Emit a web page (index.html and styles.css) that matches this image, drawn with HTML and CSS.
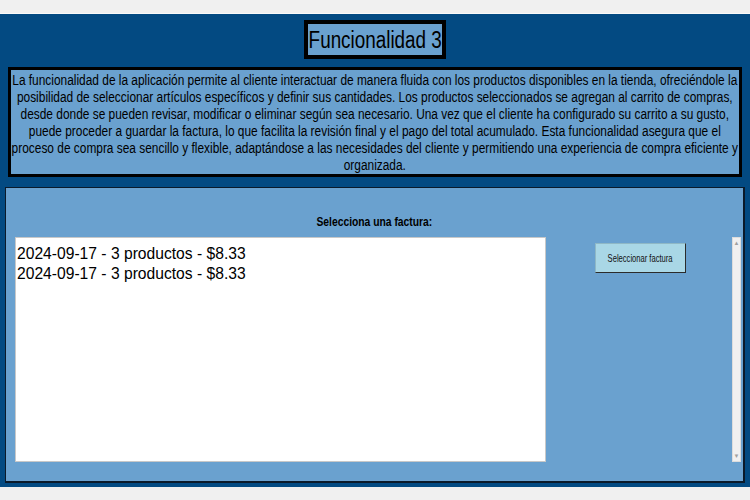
FILE: index.html
```html
<!DOCTYPE html>
<html lang="es">
<head>
<meta charset="utf-8">
<title>Funcionalidad 3</title>
<link rel="stylesheet" href="styles.css">
</head>
<body>
<div class="topbar"></div>
<main class="frame">
  <div class="title-row">
    <h1 class="title"><span class="title-text">Funcionalidad 3</span></h1>
  </div>
  <div class="desc">
    <p class="desc-text">La funcionalidad de la aplicación permite al cliente interactuar de manera fluida con los productos disponibles en la tienda, ofreciéndole la<br>posibilidad de seleccionar artículos específicos y definir sus cantidades. Los productos seleccionados se agregan al carrito de compras,<br>desde donde se pueden revisar, modificar o eliminar según sea necesario. Una vez que el cliente ha configurado su carrito a su gusto,<br>puede proceder a guardar la factura, lo que facilita la revisión final y el pago del total acumulado. Esta funcionalidad asegura que el<br>proceso de compra sea sencillo y flexible, adaptándose a las necesidades del cliente y permitiendo una experiencia de compra eficiente y<br>organizada.</p>
  </div>
  <section class="panel">
    <div class="label"><span class="label-text">Selecciona una factura:</span></div>
    <div class="panel-row">
      <ul class="list">
        <li><span class="item-text">2024-09-17 - 3 productos - $8.33</span></li>
        <li><span class="item-text">2024-09-17 - 3 productos - $8.33</span></li>
      </ul>
      <div class="actions">
        <button class="btn" type="button"><span class="btn-text">Seleccionar factura</span></button>
      </div>
      <div class="scrollbar">
        <span class="arrow">&#9650;</span>
        <span class="arrow">&#9660;</span>
      </div>
    </div>
  </section>
</main>
<div class="bottombar"></div>
</body>
</html>
```
FILE: styles.css
```css
* { box-sizing: border-box; }
html, body { margin: 0; padding: 0; }
body {
  width: 750px;
  height: 500px;
  background: #f0f0f0;
  font-family: "Liberation Sans", Arial, sans-serif;
  color: #000;
  overflow: hidden;
}
.topbar {
  height: 14px;
  background: #f0f0f0;
  border-bottom: 1px solid #fafafa;
}
.frame {
  background: #034a82;
  height: 473px;
  padding: 6px 5px 4px 5px;
  display: flex;
  flex-direction: column;
}
.title-row {
  display: flex;
  justify-content: center;
}
.title {
  margin: 0;
  width: 142px;
  height: 39px;
  border: 4px solid #000;
  background: #6aa1cf;
  font-weight: normal;
  font-size: 23px;
  line-height: 32px;
  display: flex;
  justify-content: center;
  white-space: nowrap;
}
.title-text {
  display: inline-block;
  transform: scaleX(0.82);
  transform-origin: 50% 50%;
}
.desc {
  margin: 8px 3px 0 3px;
  height: 110px;
  border: 3px solid #000;
  background: #6aa1cf;
  overflow: hidden;
  padding-top: 2px;
}
.desc-text {
  margin: 0;
  width: 856px;
  font-size: 14px;
  line-height: 17px;
  text-align: center;
  white-space: nowrap;
  transform: scaleX(0.85);
  transform-origin: 0 0;
}
.panel {
  margin-top: 10px;
  flex: 1;
  background: #6aa1cf;
  border: 1px solid #0b1a2a;
  border-width: 1px 2px 2px 1px;
  display: flex;
  flex-direction: column;
}
.label {
  font-weight: bold;
  font-size: 12px;
  line-height: 14px;
  text-align: center;
  margin-top: 27px;
  height: 22px;
  display: flex;
  justify-content: center;
  white-space: nowrap;
}
.label-text {
  display: inline-block;
  transform: scaleX(0.86);
}
.panel-row {
  display: flex;
  align-items: flex-start;
  padding-left: 9px;
}
.list {
  list-style: none;
  margin: 0;
  padding: 6px 0 0 1px;
  width: 531px;
  height: 225px;
  background: #fff;
  border: 1px solid #c8c8c8;
  font-size: 17px;
  line-height: 20px;
  white-space: nowrap;
}
.item-text {
  display: inline-block;
  transform: scaleX(0.92);
  transform-origin: 0 50%;
}
.actions {
  width: 186px;
  display: flex;
  justify-content: center;
  padding-top: 6px;
  padding-left: 3px;
}
.btn {
  width: 91px;
  height: 30px;
  background: #a9d7e6;
  border: 1px solid #8fb8c6;
  border-right-color: #2b2b2b;
  border-bottom-color: #2b2b2b;
  font-family: "Liberation Sans", Arial, sans-serif;
  font-size: 11px;
  color: #111;
  padding: 0;
  display: flex;
  justify-content: center;
  align-items: center;
  white-space: nowrap;
}
.btn-text {
  display: inline-block;
  transform: scaleX(0.69);
}
.scrollbar {
  width: 9px;
  height: 225px;
  background: #f0f0f0;
  border: 1px solid #dcdcdc;
  display: flex;
  flex-direction: column;
  justify-content: space-between;
  align-items: center;
  font-size: 6px;
  color: #a0a0a0;
  padding: 2px 0;
}
.arrow { line-height: 6px; }
.bottombar {
  height: 13px;
  background: #f0f0f0;
}
```
